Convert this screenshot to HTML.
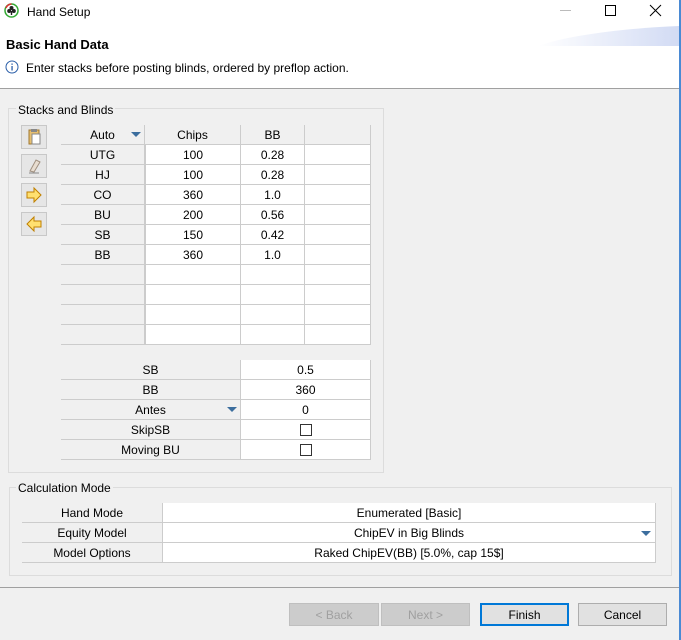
<!DOCTYPE html>
<html><head><style>
*{box-sizing:border-box;margin:0;padding:0}
body{width:681px;height:640px;overflow:hidden;background:#f0f0f0;font-family:"Liberation Sans",sans-serif;font-size:12px;color:#000;position:relative}
.a{position:absolute}
.c{position:absolute;text-align:center;line-height:19px;padding-top:1px;height:20px;border-right:1px solid #ccc;border-bottom:1px solid #ccc}
.g{background:#f0f0f0}.w{background:#fff}
.grp{position:absolute;border:1px solid #dcdcdc}
.gl{position:absolute;background:#f0f0f0;padding:0 2px;line-height:14px}
.btn{position:absolute;border:1px solid #adadad;background:#e1e1e1;text-align:center;line-height:22px;height:23px}
.tb{position:absolute;left:21px;width:26px;height:24px;border:1px solid #c8c8c8;background:#e6e6e6}
.tri{display:inline-block;width:0;height:0;border-left:5px solid transparent;border-right:5px solid transparent;border-top:5px solid #3c6e9e}
</style></head><body>
<div class="a" style="left:0;top:0;width:681px;height:89px;background:#fff;border-bottom:1px solid #a0a0a0"></div>
<div class="a" style="left:679px;top:0;width:2px;height:640px;background:#4a8ad4"></div>
<svg class="a" style="left:4px;top:3px" width="15" height="15"><circle cx="7.5" cy="7.5" r="6.5" fill="#fff" stroke="#3a3" stroke-width="1.5"/><path d="M2 5 A6.5 6.5 0 0 1 7.5 1" stroke="#d33" stroke-width="1.5" fill="none"/><circle cx="7.5" cy="5" r="2" fill="#222"/><circle cx="5.2" cy="8" r="2" fill="#222"/><circle cx="9.8" cy="8" r="2" fill="#222"/><rect x="6.8" y="8" width="1.4" height="4" fill="#222"/></svg>
<div class="a" style="left:27px;top:5px;font-size:12px">Hand Setup</div>
<div class="a" style="left:560px;top:10px;width:11px;height:1px;background:#bbb"></div>
<div class="a" style="left:605px;top:5px;width:11px;height:11px;border:1px solid #000"></div>
<svg class="a" style="left:649px;top:4px" width="13" height="13"><path d="M1 1L12 12M12 1L1 12" stroke="#000" stroke-width="1"/></svg>
<svg class="a" style="left:538px;top:25px" width="141" height="22"><defs><linearGradient id="gr" x1="0" x2="1"><stop offset="0" stop-color="#fff"/><stop offset="1" stop-color="#d2dbf4"/></linearGradient></defs><path d="M0 21 C30 10 90 3 141 1 L141 21 Z" fill="url(#gr)"/></svg>
<div class="a" style="left:6px;top:37px;font-weight:bold;font-size:13px">Basic Hand Data</div>
<svg class="a" style="left:5px;top:60px" width="14" height="14"><circle cx="7" cy="7" r="6" fill="none" stroke="#2a5ea8"/><rect x="6.4" y="6" width="1.3" height="4.5" fill="#2a5ea8"/><rect x="6.4" y="3.5" width="1.3" height="1.3" fill="#2a5ea8"/></svg>
<div class="a" style="left:26px;top:61px">Enter stacks before posting blinds, ordered by preflop action.</div>

<div class="grp" style="left:8px;top:108px;width:376px;height:365px"></div>
<div class="gl" style="left:16px;top:103px">Stacks and Blinds</div>
<div class="tb" style="top:125px"><svg width="24" height="22"><rect x="7" y="4" width="10" height="14" fill="#e8c070" stroke="#a07830"/><rect x="10" y="8" width="8" height="10" fill="#fff" stroke="#888"/><rect x="9" y="3" width="6" height="3" fill="#888"/></svg></div>
<div class="tb" style="top:154px"><svg width="24" height="22"><path d="M8 16 L14 5 L18 7 L12 17 Z" fill="#e8ddd0" stroke="#a09080"/><path d="M7 18H17" stroke="#888"/></svg></div>
<div class="tb" style="top:183px"><svg width="24" height="22"><path d="M5 8H12V4L19 11L12 18V14H5Z" fill="#ffe070" stroke="#c08000"/></svg></div>
<div class="tb" style="top:212px"><svg width="24" height="22"><path d="M19 8H12V4L5 11L12 18V14H19Z" fill="#ffe070" stroke="#c08000"/></svg></div>

<div class="c g" style="left:61px;top:125px;width:84px">Auto <span class="tri" style="position:absolute;right:3px;top:7px"></span></div>
<div class="c g" style="left:145px;top:125px;width:96px">Chips</div>
<div class="c g" style="left:241px;top:125px;width:64px">BB</div>
<div class="c g" style="left:305px;top:125px;width:66px"></div>
<div id="rows"></div>

<div class="grp" style="left:9px;top:487px;width:663px;height:89px"></div>
<div class="gl" style="left:16px;top:481px">Calculation Mode</div>
<div class="c g" style="left:22px;top:503px;width:140px;border-right:0">Hand Mode</div>
<div class="c w" style="left:162px;top:503px;width:494px;border-left:1px solid #ccc">Enumerated [Basic]</div>
<div class="c g" style="left:22px;top:523px;width:140px;border-right:0">Equity Model</div>
<div class="c w" style="left:162px;top:523px;width:494px;border-left:1px solid #ccc">ChipEV in Big Blinds<span class="tri" style="position:absolute;right:4px;top:8px"></span></div>
<div class="c g" style="left:22px;top:543px;width:140px;border-right:0">Model Options</div>
<div class="c w" style="left:162px;top:543px;width:494px;border-left:1px solid #ccc">Raked ChipEV(BB) [5.0%, cap 15$]</div>

<div class="a" style="left:0;top:587px;width:679px;height:1px;background:#a0a0a0"></div>
<div class="btn" style="left:289px;top:603px;width:90px;color:#a0a0a0;background:#ccc;border-color:#bfbfbf">&lt; Back</div>
<div class="btn" style="left:381px;top:603px;width:89px;color:#a0a0a0;background:#ccc;border-color:#bfbfbf">Next &gt;</div>
<div class="btn" style="left:480px;top:603px;width:89px;border:2px solid #0078d7;line-height:20px">Finish</div>
<div class="btn" style="left:578px;top:603px;width:89px">Cancel</div>

<script>
var d=[["UTG","100","0.28"],["HJ","100","0.28"],["CO","360","1.0"],["BU","200","0.56"],["SB","150","0.42"],["BB","360","1.0"],["","",""],["","",""],["","",""],["","",""]];
var h="";d.forEach(function(r,i){var t=145+i*20;
h+='<div class="c g" style="left:61px;top:'+t+'px;width:84px">'+r[0]+'</div><div class="c w" style="left:145px;top:'+t+'px;width:96px;border-left:1px solid #ccc">'+r[1]+'</div><div class="c w" style="left:241px;top:'+t+'px;width:64px">'+r[2]+'</div><div class="c w" style="left:305px;top:'+t+'px;width:66px"></div>';});
var b=[["SB","0.5"],["BB","360"],["Antes","0"],["SkipSB","cb"],["Moving BU","cb"]];
b.forEach(function(r,i){var t=360+i*20;var v=r[1]=="cb"?'<span style="display:inline-block;width:12px;height:12px;border:1px solid #333;vertical-align:-2px"></span>':r[1];
h+='<div class="c g" style="left:61px;top:'+t+'px;width:180px">'+r[0]+(r[0]=="Antes"?'<span class="tri" style="position:absolute;right:3px;top:7px"></span>':'')+'</div><div class="c w" style="left:241px;top:'+t+'px;width:130px">'+v+'</div>';});
document.getElementById("rows").innerHTML=h;
</script>
</body></html>
